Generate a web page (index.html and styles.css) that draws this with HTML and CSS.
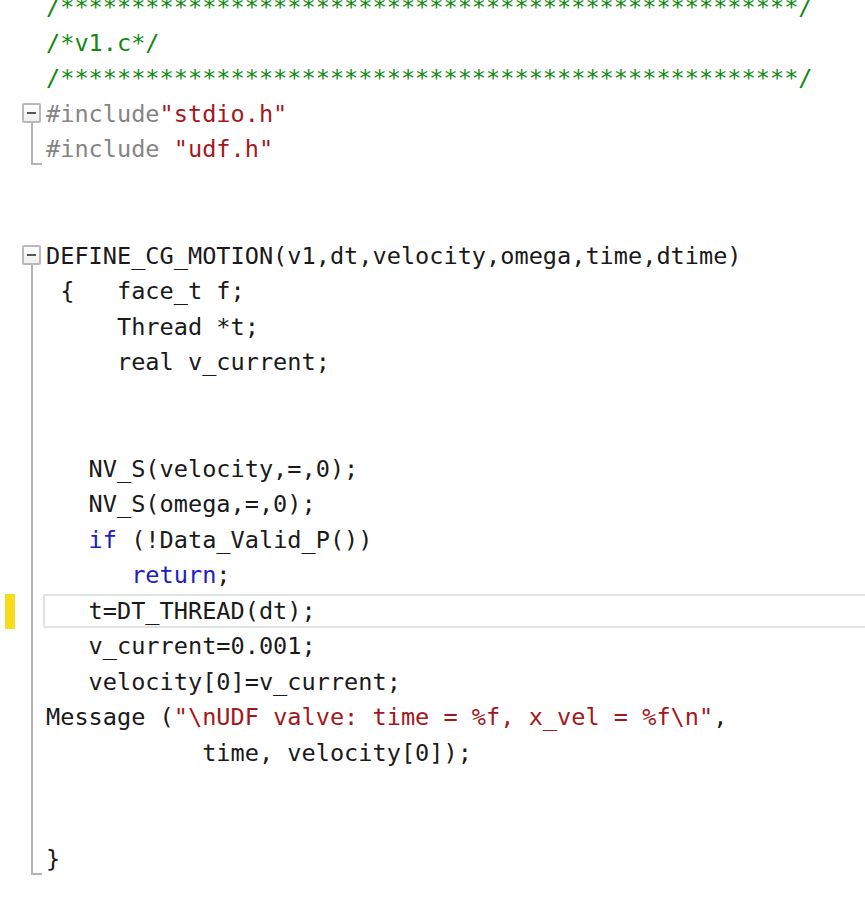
FILE: index.html
```html
<!DOCTYPE html>
<html lang="en">
<head>
<meta charset="utf-8">
<title>v1.c</title>
<link rel="stylesheet" href="styles.css">
</head>
<body>
<div class="editor">
  <div class="row"><span class="mark"></span><span class="fold"></span><span class="code"><span class="cm">/****************************************************/</span></span></div>
  <div class="row"><span class="mark"></span><span class="fold"></span><span class="code"><span class="cm">/*v1.c*/</span></span></div>
  <div class="row"><span class="mark"></span><span class="fold"></span><span class="code"><span class="cm">/****************************************************/</span></span></div>
  <div class="row"><span class="mark"></span><span class="fold fold-start"><span class="box"><span class="minus"></span></span><span class="stem"></span></span><span class="code"><span class="pp">#include</span><span class="str">"stdio.h"</span></span></div>
  <div class="row"><span class="mark"></span><span class="fold fold-end"><span class="corner"></span></span><span class="code"><span class="pp">#include</span> <span class="str">"udf.h"</span></span></div>
  <div class="row"><span class="mark"></span><span class="fold"></span><span class="code"></span></div>
  <div class="row"><span class="mark"></span><span class="fold"></span><span class="code"></span></div>
  <div class="row"><span class="mark"></span><span class="fold fold-start"><span class="box"><span class="minus"></span></span><span class="stem"></span></span><span class="code">DEFINE_CG_MOTION(v1,dt,velocity,omega,time,dtime)</span></div>
  <div class="row"><span class="mark"></span><span class="fold fold-mid"><span class="stem"></span></span><span class="code"> {   face_t f;</span></div>
  <div class="row"><span class="mark"></span><span class="fold fold-mid"><span class="stem"></span></span><span class="code">     Thread *t;</span></div>
  <div class="row"><span class="mark"></span><span class="fold fold-mid"><span class="stem"></span></span><span class="code">     real v_current;</span></div>
  <div class="row"><span class="mark"></span><span class="fold fold-mid"><span class="stem"></span></span><span class="code"></span></div>
  <div class="row"><span class="mark"></span><span class="fold fold-mid"><span class="stem"></span></span><span class="code"></span></div>
  <div class="row"><span class="mark"></span><span class="fold fold-mid"><span class="stem"></span></span><span class="code">   NV_S(velocity,=,0);</span></div>
  <div class="row"><span class="mark"></span><span class="fold fold-mid"><span class="stem"></span></span><span class="code">   NV_S(omega,=,0);</span></div>
  <div class="row"><span class="mark"></span><span class="fold fold-mid"><span class="stem"></span></span><span class="code">   <span class="kw">if</span> (!Data_Valid_P())</span></div>
  <div class="row"><span class="mark"></span><span class="fold fold-mid"><span class="stem"></span></span><span class="code">      <span class="kw">return</span>;</span></div>
  <div class="row"><span class="mark mark-on"></span><span class="fold fold-mid"><span class="stem"></span></span><span class="code current">   t=DT_THREAD(dt);</span></div>
  <div class="row"><span class="mark"></span><span class="fold fold-mid"><span class="stem"></span></span><span class="code">   v_current=0.001;</span></div>
  <div class="row"><span class="mark"></span><span class="fold fold-mid"><span class="stem"></span></span><span class="code">   velocity[0]=v_current;</span></div>
  <div class="row"><span class="mark"></span><span class="fold fold-mid"><span class="stem"></span></span><span class="code">Message (<span class="str">"\nUDF valve: time = %f, x_vel = %f\n"</span>,</span></div>
  <div class="row"><span class="mark"></span><span class="fold fold-mid"><span class="stem"></span></span><span class="code">           time, velocity[0]);</span></div>
  <div class="row"><span class="mark"></span><span class="fold fold-mid"><span class="stem"></span></span><span class="code"></span></div>
  <div class="row"><span class="mark"></span><span class="fold fold-mid"><span class="stem"></span></span><span class="code"></span></div>
  <div class="row"><span class="mark"></span><span class="fold fold-end"><span class="corner"></span></span><span class="code">}</span></div>
</div>
</body>
</html>
```
FILE: styles.css
```css
html, body {
  margin: 0;
  padding: 0;
  background: #ffffff;
  overflow: hidden;
}

.editor {
  margin-top: -10px;
  font-family: "DejaVu Sans Mono", "Liberation Mono", monospace;
  font-size: 23.58px;
  color: #1a1a1a;
}

.row {
  display: flex;
  height: 35.52px;
  line-height: 35.52px;
  white-space: pre;
}

.mark {
  flex: none;
  width: 10px;
  margin-left: 5px;
}

.mark-on {
  background: #f6dc1c;
  height: 35px;
  margin-top: 0;
}

.fold {
  flex: none;
  width: 20px;
  margin-left: 7px;
  display: flex;
  flex-direction: column;
  align-items: flex-start;
}

.box {
  box-sizing: border-box;
  width: 19px;
  height: 20px;
  margin-top: 6px;
  border: 2px solid #b9b9b9;
  border-radius: 2px;
  background: linear-gradient(#ffffff, #eeeeee);
  display: flex;
  align-items: center;
  justify-content: center;
}

.minus {
  width: 9px;
  height: 2px;
  background: #555555;
}

.stem {
  flex: 1;
  margin-left: 9px;
  border-left: 2px solid #b3b3b3;
}

.fold-mid .stem {
  height: 100%;
}

.corner {
  box-sizing: border-box;
  width: 11px;
  height: 33px;
  margin-left: 9px;
  border-left: 2px solid #b3b3b3;
  border-bottom: 2px solid #b3b3b3;
}

.code {
  flex: 1;
  margin-left: 1px;
  padding-left: 3px;
}

.code.current {
  box-sizing: border-box;
  height: 34px;
  line-height: 30px;
  margin-top: 0.5px;
  margin-right: -10px;
  padding-left: 1px;
  border: 2px solid #dfe3e6;
  border-radius: 2px;
}

.cm { color: #118a11; }
.str { color: #a3181c; }
.kw { color: #2020c0; }
.pp { color: #858585; }
```
